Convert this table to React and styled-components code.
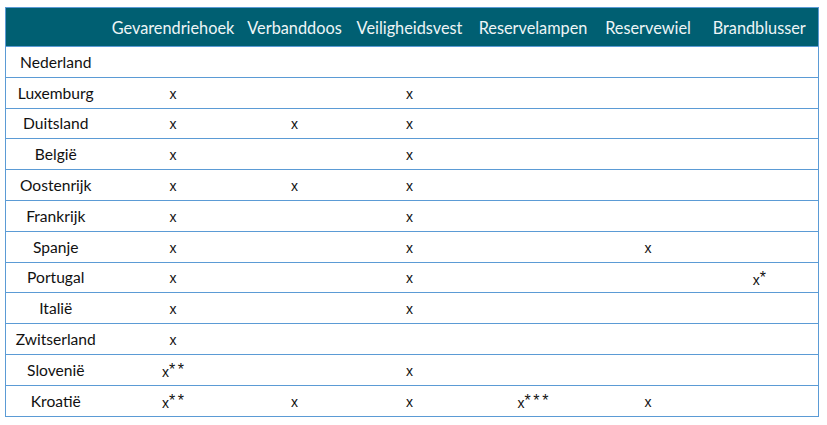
import React from "react";
import styled, { createGlobalStyle } from "styled-components";

const GlobalStyle = createGlobalStyle`
  body {
    margin: 0;
    background: #ffffff;
  }
`;

const Page = styled.div`
  padding: 7px 0 0 5px;
`;

const Table = styled.table`
  border-collapse: collapse;
  table-layout: fixed;
  width: 813px;
  border: 1px solid #5b9bd5;
  font-family: "Lato", "Liberation Sans", sans-serif;
`;

const HeadRow = styled.tr`
  background: #005f72;
  height: 39px;
`;

const HeadCell = styled.th`
  color: #eef5f6;
  font-weight: 400;
  font-size: 16.3px;
  text-align: center;
  padding: 0;
  white-space: nowrap;
  border-bottom: 1px solid #5b9bd5;
`;

const Row = styled.tr`
  height: 30.8px;
  border-bottom: 1px solid #5b9bd5;
`;

const CountryCell = styled.td`
  font-size: 15.6px;
  color: #111;
  text-align: center;
  padding: 0;
`;

const MarkCell = styled.td`
  font-family: "Liberation Sans", Arial, sans-serif;
  font-size: 14px;
  color: #111;
  text-align: center;
  padding: 2px 0 0;
  white-space: nowrap;
`;

const Stars = styled.span`
  font-size: 16px;
  letter-spacing: 2.6px;
  margin-right: -2.6px;
  vertical-align: 2px;
`;

const columns = [
  { label: "", width: 100 },
  { label: "Gevarendriehoek", width: 135 },
  { label: "Verbanddoos", width: 108 },
  { label: "Veiligheidsvest", width: 122 },
  { label: "Reservelampen", width: 125 },
  { label: "Reservewiel", width: 105 },
  { label: "Brandblusser", width: 118 },
];

const rows = [
  ["Nederland", "", "", "", "", "", ""],
  ["Luxemburg", "x", "", "x", "", "", ""],
  ["Duitsland", "x", "x", "x", "", "", ""],
  ["België", "x", "", "x", "", "", ""],
  ["Oostenrijk", "x", "x", "x", "", "", ""],
  ["Frankrijk", "x", "", "x", "", "", ""],
  ["Spanje", "x", "", "x", "", "x", ""],
  ["Portugal", "x", "", "x", "", "", "x*"],
  ["Italië", "x", "", "x", "", "", ""],
  ["Zwitserland", "x", "", "", "", "", ""],
  ["Slovenië", "x**", "", "x", "", "", ""],
  ["Kroatië", "x**", "x", "x", "x***", "x", ""],
];

function Mark({ value }) {
  if (!value) return null;
  const stars = value.slice(1);
  return (
    <>
      x{stars && <Stars>{stars}</Stars>}
    </>
  );
}

export default function App() {
  return (
    <>
      <GlobalStyle />
      <Page>
        <Table>
          <colgroup>
            {columns.map((c, i) => (
              <col key={i} style={{ width: c.width }} />
            ))}
          </colgroup>
          <thead>
            <HeadRow>
              {columns.map((c, i) => (
                <HeadCell key={i}>{c.label}</HeadCell>
              ))}
            </HeadRow>
          </thead>
          <tbody>
            {rows.map(([country, ...marks]) => (
              <Row key={country}>
                <CountryCell>{country}</CountryCell>
                {marks.map((m, i) => (
                  <MarkCell key={i}>
                    <Mark value={m} />
                  </MarkCell>
                ))}
              </Row>
            ))}
          </tbody>
        </Table>
      </Page>
    </>
  );
}
